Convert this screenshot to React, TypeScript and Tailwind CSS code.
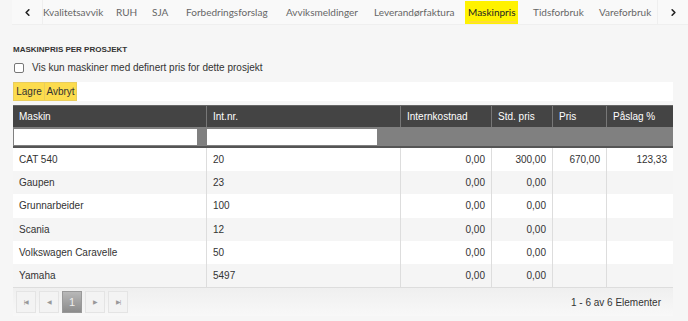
import { ChevronLeft, ChevronRight } from "lucide-react";

// tab label + slot class (text starts at the slot's left edge)
const TABS: [string, string][] = [
  ["Kvalitetsavvik", "w-[73px]"],
  ["RUH", "w-[36px]"],
  ["SJA", "w-[34px]"],
  ["Forbedringsforslag", "w-[100px]"],
  ["Avviksmeldinger", "w-[88px]"],
  ["Leverandørfaktura", "w-[95px]"],
  ["Maskinpris", "w-[64px]"],
  ["Tidsforbruk", "w-[66px]"],
  ["Vareforbruk", "w-[57px]"],
];

const ROWS = [
  { name: "CAT 540", nr: "20", intern: "0,00", std: "300,00", pris: "670,00", paaslag: "123,33" },
  { name: "Gaupen", nr: "23", intern: "0,00", std: "0,00", pris: "", paaslag: "" },
  { name: "Grunnarbeider", nr: "100", intern: "0,00", std: "0,00", pris: "", paaslag: "" },
  { name: "Scania", nr: "12", intern: "0,00", std: "0,00", pris: "", paaslag: "" },
  { name: "Volkswagen Caravelle", nr: "50", intern: "0,00", std: "0,00", pris: "", paaslag: "" },
  { name: "Yamaha", nr: "5497", intern: "0,00", std: "0,00", pris: "", paaslag: "" },
];

const COLS = "grid grid-cols-[193px_194px_91px_61px_54px_67px]";

function PagerButton({ children, active }: { children: React.ReactNode; active?: boolean }) {
  return (
    <div
      className={
        active
          ? "w-[20px] h-[22px] flex items-center justify-center bg-gradient-to-b from-[#b8b8b8] to-[#8c8c8c] text-[#eee] text-[11px] border border-[#999]"
          : "w-[20px] h-[22px] flex items-center justify-center bg-[#f3f3f3] border border-[#e4e4e4] text-[#999] text-[6px] tracking-[-1px]"
      }
    >
      {children}
    </div>
  );
}

export default function App() {
  return (
    <div className="w-[688px] h-[321px] bg-[#f6f6f6] overflow-hidden font-['Liberation_Sans'] text-[#333]">
      {/* Tabs */}
      <div className="ml-[12px] h-[25px] bg-[#f9f9f9] border-b border-[#efefef] flex items-stretch font-['Lato'] text-[10px] text-[#666]">
        <div className="w-[31px] shrink-0 flex items-center justify-center border-r border-[#efefef] text-[#222]">
          <ChevronLeft className="w-[11px] h-[11px]" strokeWidth={3.5} />
        </div>
        <div className="flex-1 min-w-0 flex items-center overflow-hidden">
          {TABS.map(([t, w]) => (
            <div key={t} className={`${w} relative shrink-0 h-full flex items-center`}>
              {t === "Maskinpris" ? (
                <>
                  <span className="bg-[#fff200] text-[#222] px-[3px] py-[4px] -ml-[4px] whitespace-nowrap">{t}</span>
                  <span className="absolute left-0 w-[47px] bottom-[1px] h-[2px] bg-[#ffdd33]" />
                </>
              ) : (
                <span className="whitespace-nowrap">{t}</span>
              )}
            </div>
          ))}
        </div>
        <div className="w-[31px] shrink-0 flex items-center justify-center border-l border-[#efefef] text-[#222]">
          <ChevronRight className="w-[11px] h-[11px]" strokeWidth={3.5} />
        </div>
      </div>

      <div className="pl-[13px] pr-[15px]">
        <h2 className="mt-[20px] text-[8px] font-bold uppercase text-[#333] leading-[10px]">
          Maskinpris per prosjekt
        </h2>
        <label className="mt-[7px] flex items-center gap-[8px] text-[10px] text-[#333] leading-[12px] pl-[1px]">
          <span className="w-[10px] h-[10px] border border-[#777] rounded-[2px] bg-white" />
          Vis kun maskiner med definert pris for dette prosjekt
        </label>

        {/* Toolbar */}
        <div className="mt-[8px] h-[19px] bg-white flex items-stretch text-[10px] text-[#333]">
          <button className="w-[32px] bg-[#fcdc4d] border border-[#e9cd5c]">Lagre</button>
          <button className="w-[32px] bg-[#fcdc4d] border border-[#e9cd5c] border-l-0">Avbryt</button>
        </div>

        {/* Table */}
        <div className="mt-[4px] w-[660px]">
          <div className={`${COLS} h-[22px] bg-[#444] text-white text-[10px] border-t border-[#666]`}>
            {["Maskin", "Int.nr.", "Internkostnad", "Std. pris", "Pris", "Påslag %"].map((h, i) => (
              <div
                key={h}
                className={`flex items-center px-[6px] ${i > 0 ? "border-l border-[#777]" : ""}`}
              >
                {h}
              </div>
            ))}
          </div>
          <div className={`${COLS} h-[21px] bg-[#808080] border-b-2 border-[#555]`}>
            <div className="pl-[1px] pr-[9px] py-[2px]">
              <div className="h-[16px] bg-white" />
            </div>
            <div className="pl-[1px] pr-[23px] py-[2px]">
              <div className="h-[16px] bg-white" />
            </div>
          </div>
          {ROWS.map((r, i) => (
            <div
              key={r.name}
              className={`${COLS} h-[23.2px] text-[10px] text-[#333] ${i % 2 === 0 ? "bg-white" : "bg-[#f5f5f5]"}`}
            >
              <div className="flex items-center px-[6px]">{r.name}</div>
              <div className="flex items-center px-[6px] border-l border-[#ddd]">{r.nr}</div>
              <div className="flex items-center justify-end px-[6px] border-l border-[#ddd]">{r.intern}</div>
              <div className="flex items-center justify-end px-[6px] border-l border-[#ddd]">{r.std}</div>
              <div className="flex items-center justify-end px-[6px] border-l border-[#ddd]">{r.pris}</div>
              <div className="flex items-center justify-end px-[6px] border-l border-[#ddd]">{r.paaslag}</div>
            </div>
          ))}

          {/* Pager */}
          <div className="h-[29px] border-t border-[#ddd] bg-gradient-to-b from-[#efefef] to-[#f8f8f8] flex items-center justify-between pl-[3px] pr-[12px]">
            <div className="flex gap-[3px]">
              <PagerButton>|◀</PagerButton>
              <PagerButton>◀</PagerButton>
              <PagerButton active>1</PagerButton>
              <PagerButton>▶</PagerButton>
              <PagerButton>▶|</PagerButton>
            </div>
            <span className="text-[10px] text-[#333]">1 - 6 av 6 Elementer</span>
          </div>
        </div>
      </div>
    </div>
  );
}
